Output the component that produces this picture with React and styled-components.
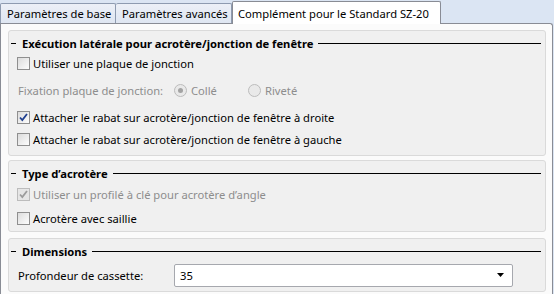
import styled, { createGlobalStyle } from 'styled-components';

const GlobalStyle = createGlobalStyle`
  body {
    margin: 0;
    background: #ffffff;
  }
`;

const Window = styled.div`
  width: 554px;
  height: 294px;
  overflow: hidden;
  display: flex;
  flex-direction: column;
  background: #dbe5f3;
  font-family: "Noto Sans", "Open Sans", sans-serif;
  font-size: 11.2px;
  color: #000;
`;

const TabStrip = styled.div`
  height: 23px;
  display: flex;
  align-items: flex-end;
`;

const Tab = styled.div`
  position: relative;
  height: ${({ $active }) => ($active ? '23px' : '20px')};
  margin-bottom: ${({ $active }) => ($active ? '-1px' : '0')};
  width: ${({ $w }) => $w}px;
  box-sizing: border-box;
  display: flex;
  align-items: center;
  padding: 0 ${({ $active }) => ($active ? '5px' : '6px')};
  border: 1px solid ${({ $active }) => ($active ? '#898c95' : '#8e9bb0')};
  border-bottom: none;
  border-left-width: ${({ $first, $active }) => ($first || $active ? '1px' : '0')};
  border-radius: 2px 2px 0 0;
  background: ${({ $active }) =>
    $active ? '#ffffff' : 'linear-gradient(#ecf0f7, #dfe6f2)'};
  z-index: ${({ $active }) => ($active ? 2 : 1)};
  white-space: nowrap;
`;

const Panel = styled.div`
  flex: 1;
  display: flex;
  flex-direction: column;
  gap: 4px;
  padding: 6px 6px 0 7px;
  margin-right: 1px;
  background: #fbfbfb;
  border: 1px solid #898c95;
  border-bottom: none;
  border-top-right-radius: 3px;
`;

const Group = styled.div`
  display: flex;
  flex-direction: column;
  padding: 3px 4px ${({ $pb }) => $pb}px 2px;
  margin-top: ${({ $mt }) => $mt || 0}px;
  background: #f0f0f0;
  border: 1px solid #dadada;
  border-radius: 3px;
`;

const Title = styled.div`
  height: 18px;
  display: flex;
  align-items: center;
  font-weight: 700;

  &::before {
    content: '';
    width: 5px;
    height: 1px;
    background: #000;
    margin-right: 6px;
  }

  &::after {
    content: '';
    flex: 1;
    height: 1px;
    background: #000;
    margin-left: 5px;
  }
`;

const Row = styled.div`
  height: ${({ $h }) => $h || 24}px;
  display: flex;
  align-items: center;
  padding-left: 6px;
  color: ${({ $disabled }) => ($disabled ? '#8d8d8d' : '#000')};
  white-space: nowrap;
`;

const Box = styled.span`
  width: 13px;
  height: 13px;
  box-sizing: border-box;
  margin-right: 3px;
  border: 1px solid ${({ $disabled }) => ($disabled ? '#bcbcbc' : '#8f8f8f')};
  background: ${({ $disabled }) =>
    $disabled ? '#e6e6e6' : 'linear-gradient(135deg, #dcdcdc, #fdfdfd)'};
  display: flex;
  align-items: center;
  justify-content: center;
`;

const Fixation = styled.span`
  width: 156px;
  padding-left: 1px;
`;

const Radio = styled.span`
  width: 13px;
  height: 13px;
  box-sizing: border-box;
  border-radius: 50%;
  border: 1px solid #bcbcbc;
  background: #e9e9e9;
  margin-right: 4px;
  display: flex;
  align-items: center;
  justify-content: center;

  &::after {
    content: '';
    width: 5px;
    height: 5px;
    border-radius: 50%;
    background: ${({ $on }) => ($on ? '#a3a3a3' : 'transparent')};
  }
`;

const RadioOption = styled.span`
  display: flex;
  align-items: center;
  width: ${({ $w }) => $w}px;
`;

const FieldLabel = styled.span`
  width: 156px;
  padding-left: 1px;
`;

const Select = styled.div`
  width: 339px;
  height: 23px;
  box-sizing: border-box;
  display: flex;
  align-items: center;
  justify-content: space-between;
  padding: 0 8px 0 5px;
  background: #fff;
  border: 1px solid #a6a8ae;
  border-radius: 2px;
`;

const Check = ({ color }) => (
  <svg width="11" height="11" viewBox="0 0 11 11">
    <path d="M2 5.5 L4.3 8 L9 2" fill="none" stroke={color} strokeWidth="1.8" />
  </svg>
);

const Checkbox = ({ checked, disabled, h, children }) => (
  <Row $disabled={disabled} $h={h}>
    <Box $disabled={disabled}>
      {checked && <Check color={disabled ? '#9c9c9c' : '#1f3f8f'} />}
    </Box>
    {children}
  </Row>
);

const Arrow = () => (
  <svg width="7" height="4" viewBox="0 0 7 4">
    <path d="M0 0 H7 L3.5 4 Z" fill="#000" />
  </svg>
);

export default function App() {
  return (
    <Window>
      <GlobalStyle />
      <TabStrip>
        <Tab $w={116} $first>Paramètres de base</Tab>
        <Tab $w={116}>Paramètres avancés</Tab>
        <Tab $w={209} $active>Complément pour le Standard SZ-20</Tab>
      </TabStrip>
      <Panel>
        <Group $pb={3}>
          <Title>Exécution latérale pour acrotère/jonction de fenêtre</Title>
          <Checkbox h={22}>Utiliser une plaque de jonction</Checkbox>
          <Row $h={33} $disabled>
            <Fixation>Fixation plaque de jonction:</Fixation>
            <RadioOption $w={74}>
              <Radio $on />
              Collé
            </RadioOption>
            <RadioOption $w={80}>
              <Radio />
              Riveté
            </RadioOption>
          </Row>
          <Checkbox checked h={20}>Attacher le rabat sur acrotère/jonction de fenêtre à droite</Checkbox>
          <Checkbox h={25}>Attacher le rabat sur acrotère/jonction de fenêtre à gauche</Checkbox>
        </Group>
        <Group $pb={1}>
          <Title>Type d’acrotère</Title>
          <Checkbox checked disabled>Utiliser un profilé à clé pour acrotère d’angle</Checkbox>
          <Checkbox>Acrotère avec saillie</Checkbox>
        </Group>
        <Group $pb={1} $mt={2}>
          <Title>Dimensions</Title>
          <Row $h={30}>
            <FieldLabel>Profondeur de cassette:</FieldLabel>
            <Select>
              <span>35</span>
              <Arrow />
            </Select>
          </Row>
        </Group>
      </Panel>
    </Window>
  );
}
